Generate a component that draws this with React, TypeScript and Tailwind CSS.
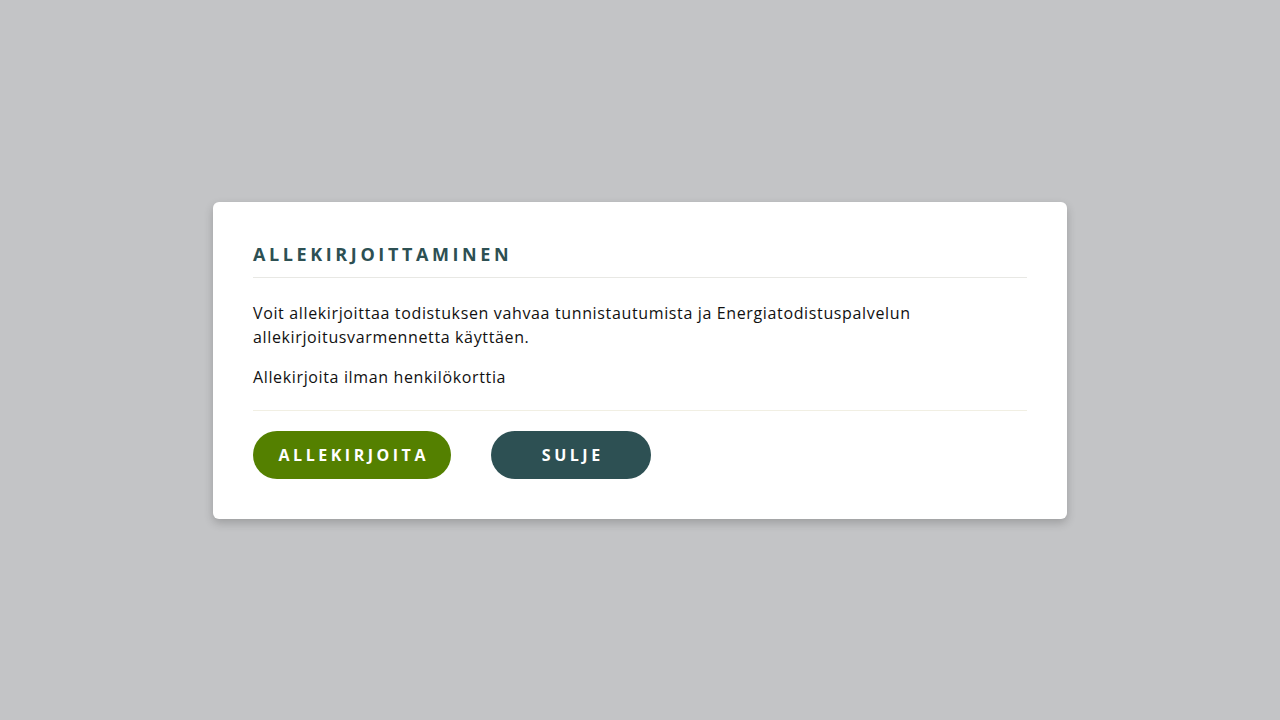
export default function App() {
  return (
    <div
      className="flex h-[720px] w-full items-center justify-center bg-[#c3c4c6]"
      style={{ fontFamily: '"Open Sans", "Liberation Sans", sans-serif' }}
    >
      <div className="w-[854px] rounded-md bg-white p-10 shadow-[0_4px_10px_rgba(0,0,0,0.2)]">
        <h2 className="border-b border-[#e8e8e4] pb-[11px] text-[18px] font-bold leading-6 tracking-[0.2em] text-[#2d5053]">
          ALLEKIRJOITTAMINEN
        </h2>
        <div className="border-b border-[#f1efe3] pt-[23px] pb-[21px] text-[16px] leading-6 tracking-[0.04em] text-[#111]">
          <p>
            Voit allekirjoittaa todistuksen vahvaa tunnistautumista ja Energiatodistuspalvelun
            allekirjoitusvarmennetta käyttäen.
          </p>
          <p className="mt-4">Allekirjoita ilman henkilökorttia</p>
        </div>
        <div className="flex gap-10 pt-5">
          <button
            type="button"
            className="h-12 w-[198px] rounded-full bg-[#548000] pl-[0.22em] text-[16px] font-bold tracking-[0.22em] text-white"
          >
            ALLEKIRJOITA
          </button>
          <button
            type="button"
            className="h-12 w-[160px] rounded-full bg-[#2d5053] pl-[0.22em] text-[16px] font-bold tracking-[0.22em] text-white"
          >
            SULJE
          </button>
        </div>
      </div>
    </div>
  )
}
